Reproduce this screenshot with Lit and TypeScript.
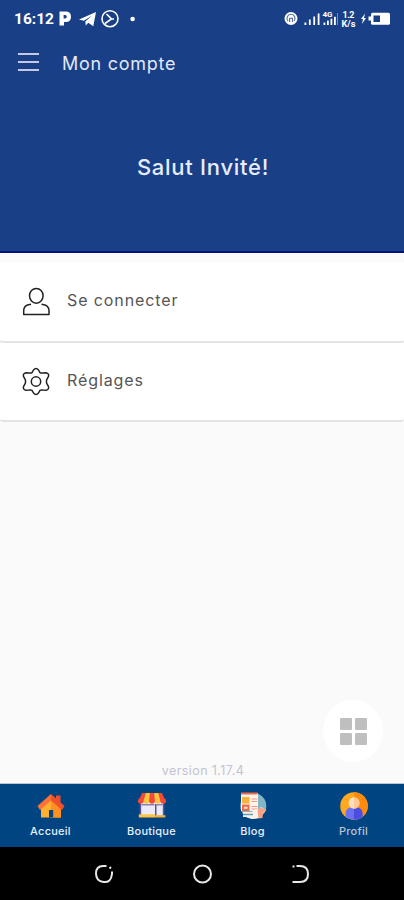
import { LitElement, html, svg, css } from "lit";
import { customElement, property } from "lit/decorators.js";

const icons: Record<string, unknown> = {
  user: html`<svg width="28" height="29" viewBox="0 0 28 29" fill="none" stroke="#222" stroke-width="1.5" stroke-linejoin="round">
    <ellipse cx="14.3" cy="8.8" rx="6.8" ry="7.4"/>
    <path d="M9 17.3 L5.5 18 Q1.7 19.6 1.7 23.5 V27.5 H27 V23.5 Q27 19.6 23 18 L19.5 17.3"/></svg>`,
  gear: html`<svg width="28" height="29" viewBox="0 0 28 29" fill="none" stroke="#222" stroke-width="1.5" stroke-linejoin="round">
    <path d="M11.5 3 Q14 0 16.5 3 L18 5.6 Q19 6.4 21 5.9 L24 5.7 Q27.5 6.5 26.4 9.7 L24.7 12.6 Q24.2 14.5 24.7 16.4 L26.4 19.3 Q27.5 22.5 24 23.3 L21 23.1 Q19 22.6 18 23.4 L16.5 26 Q14 29 11.5 26 L10 23.4 Q9 22.6 7 23.1 L4 23.3 Q.5 22.5 1.6 19.3 L3.3 16.4 Q3.8 14.5 3.3 12.6 L1.6 9.7 Q.5 6.5 4 5.7 L7 5.9 Q9 6.4 10 5.6 Z"/>
    <circle cx="14" cy="14.5" r="4.7"/></svg>`,
  home: html`<svg width="28" height="28" viewBox="0 0 28 28">
    <path d="M19 3.5h4.5v8H19z" fill="#e9502a"/>
    <path d="M4 13 14 4l10 9v12.5H4z" fill="#ffb02e"/><path d="M14 4l10 9v12.5H14z" fill="#ff9124"/>
    <path d="M12 18h4.2v7.5H12z" fill="#004481"/>
    <path d="M.5 14 14 2v6.6L3 18z" fill="#ff7139"/><path d="M27.5 14 14 2v6.6L25 18z" fill="#f0512b"/></svg>`,
  shop: html`<svg width="28" height="28" viewBox="0 0 28 28">
    <path d="M2.5 10h23v14h-23z" fill="#eceafa"/><path d="M17 12h1.5v12H17zM24.8 11h1.5v13h-1.5zM1.7 11h1.5v13H1.7z" fill="#5b568f"/>
    <path d="M3.5 12h13v1.6h-13zM18.5 12h6v1.6h-6z" fill="#8f7fae"/>
    <path d="M4 1h20l4 9H0z" fill="#f34b36"/>
    <path d="M7.8 1h4L11 10H5.4zM16.2 1h4l2.4 9H17z" fill="#ffc53c"/>
    <circle cx="2.8" cy="9" r="2.8" fill="#f34b36"/><circle cx="8.4" cy="9" r="2.8" fill="#ffc53c"/><circle cx="14" cy="9" r="2.8" fill="#f34b36"/><circle cx="19.6" cy="9" r="2.8" fill="#ffc53c"/><circle cx="25.2" cy="9" r="2.8" fill="#f34b36"/>
    <path d="M.8 22.3H17v3.2H.8z" fill="#ffc53c"/><path d="M17 23.2h10.4v2.3H17z" fill="#f4ad39"/></svg>`,
  blog: html`<svg width="28" height="28" viewBox="0 0 28 28">
    <circle cx="14.3" cy="14" r="13" fill="#80b6c6"/>
    <path d="M2 1h17v18H2z" fill="#fff3ea"/>
    <path d="M2 .6h16.5v2H2zM3 12.5h7.5v6.5H3z" fill="#f26a4b"/><path d="M3 5h7.5v6.5H3z" fill="#f8b33a"/>
    <path d="M5 14.8h3.5v2H5z" fill="#ffe3d4"/>
    <path d="M12.5 7h6M12.5 9.5h6M12.5 14.5h6M12.5 17h6" stroke="#f29a85" stroke-width="1.1"/>
    <path d="M4 20h9l4-3h3l2-2 5 3-2 3-4 1-1 4-7 1-6-2H4z" fill="#fff1e8"/>
    <path d="M18.5 17.5l3.5-2 5.5 2.5-3.5 3-.5 5-4 .5z" fill="#f7a187"/>
    <path d="M4 22.5h10" stroke="#5ca3b8" stroke-width="1.5"/></svg>`,
  profile: html`<svg width="28" height="28" viewBox="0 0 28 28">
    <circle cx="14" cy="14" r="13.8" fill="#ffa91f"/><path d="M14 .2a13.8 13.8 0 0 1 0 27.6z" fill="#ff8b0d"/>
    <path d="M5.5 24.8V22q0-6 5.5-6.5h6q5.5 .5 5.5 6.5v2.8a13.8 13.8 0 0 1-17 0z" fill="#6a70f4"/><path d="M14 15.5h3q5.5 .5 5.5 6.5v2.8a13.8 13.8 0 0 1-8.5 3z" fill="#4b4de0"/>
    <ellipse cx="14" cy="11" rx="5.5" ry="5.8" fill="#ffdfbd"/><path d="M14 5.2a5.5 5.8 0 0 1 0 11.6z" fill="#ffc993"/></svg>`,
};

@customElement("status-bar")
class StatusBar extends LitElement {
  static styles = css`
    :host { display: flex; height: 38px; align-items: center; padding: 0 12px 0 14px; box-sizing: border-box; color: #fff; }
    .time { font: 700 15.5px/18px Roboto, sans-serif; width: 45px; }
    svg { display: block; flex: none; }
    .right { margin-left: auto; }
    text { font-family: Roboto, sans-serif; font-weight: 700; }
  `;
  render() {
    const bars = (x: number, base: number, step: number, gap: number) => [0, 1, 2, 3].map(
      (i) => svg`<rect x=${x + i * gap} y=${base - 2.5 - i * step} width="1.8" height=${2.5 + i * step}/>`);
    return html`
      <span class="time">16:12</span>
      <svg width="80" height="20" viewBox="0 0 80 20" fill="#fff">
        <path fill-rule="evenodd" d="M.5 2.5h6q5.500 0 5.500 5.300T6.500 13H5V16.500H.5zM4.600 6v3.600h1.500q1.700 0 1.700-1.800T6.100 6z"/>
        <path d="M20 10.5 37 3l-2.7 14.3-5-3.5-2.5 2.7-.5-4 6.5-5.7-8 5z"/>
        <circle cx="51" cy="9.7" r="8" fill="none" stroke="#fff" stroke-width="1.6"/>
        <path d="M47.500 5 52.500 10 46 14.500M52.500 10h2.500" fill="none" stroke="#fff" stroke-width="1.7"/>
        <circle cx="73.6" cy="10" r="2.3"/>
      </svg>
      <svg class="right" width="108" height="20" viewBox="0 0 108 20" fill="#fff">
        <circle cx="7" cy="9.5" r="6.5"/><path d="M7 5.3a4 4 0 0 0-3 6.7M7 5.3a4 4 0 0 1 3 6.7M5.600 13V9.3h2.8V13" fill="none" stroke="#4e6da4" stroke-width="1.1"/>
        ${bars(20.5, 16, 3, 4.4)}
        ${bars(39.5, 16, 1.9, 3.5)}
        <text x="38.5" y="8" font-size="8" textLength="10">4G</text>
        <path d="M53 4h1v12h-1z" opacity=".4"/>
        <text x="58.5" y="8.8" font-size="9" textLength="12">1.2</text>
        <text x="57.5" y="17.5" font-size="8.5" textLength="14" lengthAdjust="spacingAndGlyphs">K/s</text>
        <path d="M81 4.5 77 10h2l-1 5 4-6h-2zM84.5 7.5h3v4h-3z"/>
        <rect x="87" y="3.8" width="19" height="12" rx="1.5"/><path d="M89.5 6.5h6.5v6.5h-6.5z" fill="#193f87"/>
      </svg>`;
  }
}

@customElement("menu-row")
class MenuRow extends LitElement {
  @property() icon = "";
  @property() label = "";
  static styles = css`
    :host { display: flex; height: 79px; box-sizing: border-box; align-items: center; padding-left: 22px; gap: 17px; background: #fff;
      border-bottom: 2px solid #e4e4e4; border-radius: 3px; }
    svg { display: block; }
    .label { font: 400 16px/24px Inter, "Liberation Sans", sans-serif; color: #555; letter-spacing: .9px; margin-top: -4px; }
  `;
  render() { return html`${icons[this.icon]}<span class="label">${this.label}</span>`; }
}

@customElement("tab-item")
class TabItem extends LitElement {
  @property() icon = "";
  @property() label = "";
  static styles = css`
    :host { display: flex; flex: 1; flex-direction: column; align-items: center; padding-top: 8px; }
    svg { display: block; }
    .label { font: 500 11px/14px Inter, "Liberation Sans", sans-serif; letter-spacing: .25px; color: var(--tab-color, #e8eef8); margin-top: 4px; }
  `;
  render() { return html`${icons[this.icon]}<span class="label">${this.label}</span>`; }
}

@customElement("app-root")
class AppRoot extends LitElement {
  static styles = css`
    :host { display: flex; flex-direction: column; width: 404px; height: 900px; overflow: hidden; background: #fafafa;
      font-family: Inter, "Liberation Sans", sans-serif; position: relative; }
    .header { height: 253px; box-sizing: border-box; background: #193f87; border-bottom: 2px solid #03127d; flex: none; }
    .toolbar { display: flex; align-items: center; height: 52px; padding-left: 18px; gap: 23px; }
    .burger { display: flex; flex-direction: column; gap: 6px; width: 21px; margin-top: -4px; }
    .line { height: 2px; background: #c3c9e5; }
    .title { font-size: 18px; line-height: 26px; color: #e3e8f6; letter-spacing: .75px; }
    .hello { margin-top: 60px; padding-left: 2px; text-align: center; font-size: 22px; line-height: 34px; font-weight: 500; color: #e7ecfa; letter-spacing: .72px; }
    .menu { margin-top: 9px; display: flex; flex-direction: column; }
    .first { height: 81px; }
    .version { margin-top: auto; padding-left: 2px; text-align: center; font-size: 12.5px; line-height: 18px; letter-spacing: .4px; color: #c2c4d0; padding-bottom: 3px; }
    .tabs { display: flex; height: 63px; background: #004481; border-top: 1px solid #b9c5d4; flex: none; box-sizing: content-box; }
    .dim { --tab-color: #bdc3cf; }
    .system { height: 53px; background: #000; display: flex; justify-content: center; align-items: center; gap: 78px; flex: none; }
    .system svg { display: block; }
    .fab { position: absolute; right: 21px; bottom: 138px; width: 60px; height: 62px; border-radius: 50%; background: #fff;
      display: grid; grid-template-columns: 12px 12px; grid-template-rows: 12px 12px; gap: 3px; place-content: center; }
    .cell { background: #bfbfbf; border-radius: 1px; }
  `;
  render() {
    return html`
      <div class="header">
        <status-bar></status-bar>
        <div class="toolbar">
          <div class="burger"><div class="line"></div><div class="line"></div><div class="line"></div></div>
          <span class="title">Mon compte</span>
        </div>
        <div class="hello">Salut Invité!</div>
      </div>
      <div class="menu">
        <menu-row class="first" icon="user" label="Se connecter"></menu-row>
        <menu-row icon="gear" label="Réglages"></menu-row>
      </div>
      <div class="version">version 1.17.4</div>
      <div class="tabs">
        <tab-item icon="home" label="Accueil"></tab-item>
        <tab-item icon="shop" label="Boutique"></tab-item>
        <tab-item icon="blog" label="Blog"></tab-item>
        <tab-item class="dim" icon="profile" label="Profil"></tab-item>
      </div>
      <div class="system">
        <svg width="20" height="20" viewBox="0 0 20 20" fill="none" stroke="#e8e8e8" stroke-width="2"><path d="M12.5 2H9Q2 2 2 9.5T9.5 18 18 10V7.5"/><path d="M15.5 4.5l1.5-1.5"/></svg>
        <svg width="20" height="20" viewBox="0 0 20 20" fill="none" stroke="#e8e8e8" stroke-width="2"><circle cx="10.5" cy="10" r="8.5"/></svg>
        <svg width="20" height="20" viewBox="0 0 20 20" fill="none" stroke="#e8e8e8" stroke-width="2"><path d="M6.5 2H10q8 0 8 8t-8 8H2.5"/><path d="M2.500 2.5h2"/></svg>
      </div>
      <div class="fab"><div class="cell"></div><div class="cell"></div><div class="cell"></div><div class="cell"></div></div>`;
  }
}
